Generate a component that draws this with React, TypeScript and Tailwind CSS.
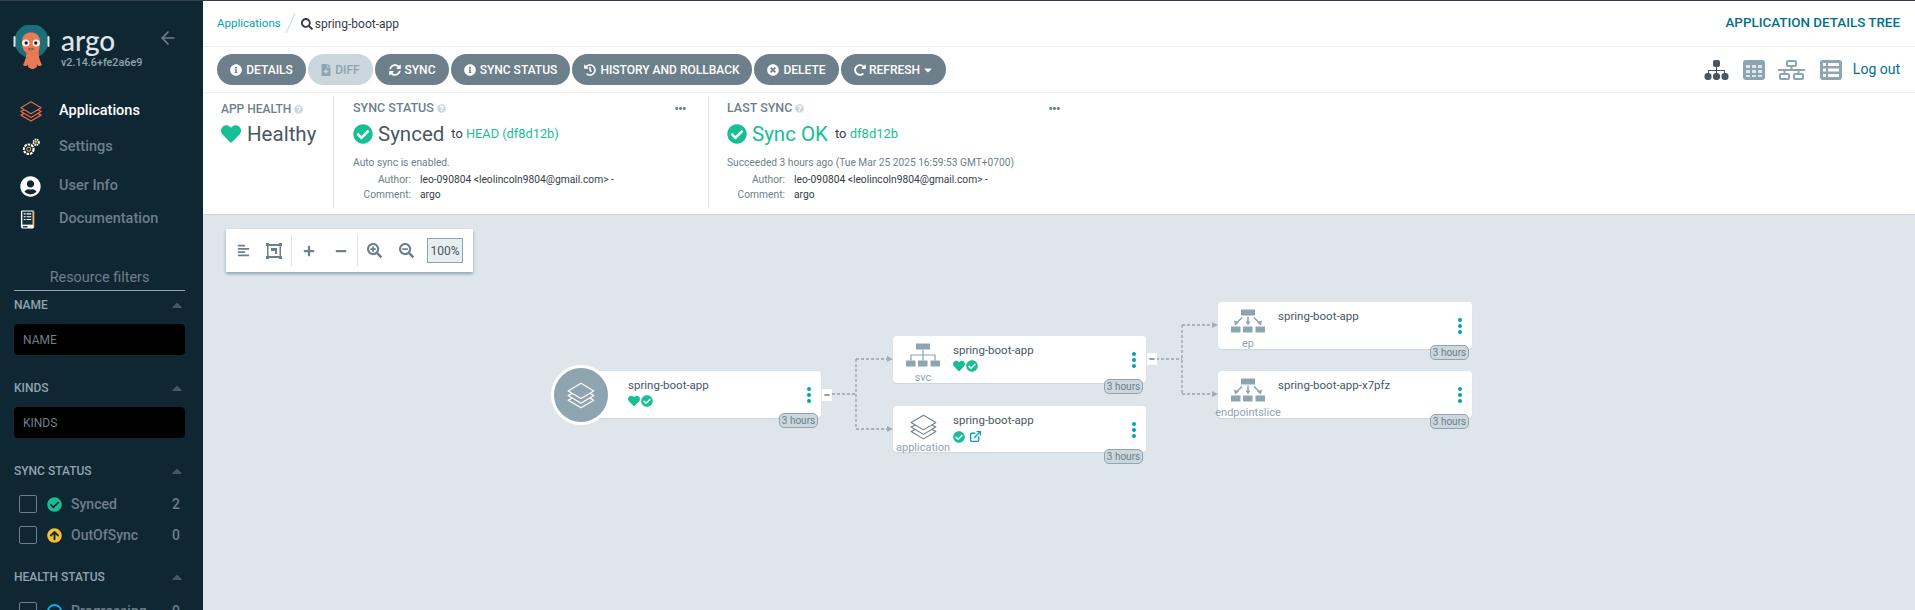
import { ArrowLeft, ExternalLink } from "lucide-react";
import {
  FaAlignLeft,
  FaCaretDown,
  FaCaretUp,
  FaCheckCircle,
  FaEllipsisH,
  FaFileMedical,
  FaHeart,
  FaHistory,
  FaInfoCircle,
  FaMinus,
  FaPlus,
  FaQuestionCircle,
  FaRedoAlt,
  FaSearch,
  FaSearchMinus,
  FaSearchPlus,
  FaSyncAlt,
  FaTimesCircle,
  FaUserCircle,
  FaArrowCircleUp,
} from "react-icons/fa";

function Layers({ className, strokeWidth = 1 }: { className?: string; strokeWidth?: number }) {
  return (
    <svg viewBox="0 0 24 24" fill="none" stroke="currentColor" strokeWidth={strokeWidth} strokeLinejoin="round" className={className}>
      <path d="M12 2 23 8.500 12 15 1 8.500z" />
      <path d="M4.500 10.600 1 12.500 12 19 23 12.500 19.500 10.600" />
      <path d="M4.500 14.600 1 16.500 12 23 23 16.500 19.500 14.600" />
    </svg>
  );
}

function ArgoLogo() {
  return (
    <svg viewBox="0 0 38 46" className="w-[38px] h-[46px] shrink-0">
      <circle cx="18.500" cy="16" r="17" fill="#1b6e7a" />
      <rect x="0.500" y="11" width="2" height="11" rx="1" fill="#dee6eb" />
      <rect x="34.500" y="11" width="2" height="11" rx="1" fill="#dee6eb" />
      <path d="M9 17C9 10 13 7.500 18 7.500S27 10 27 17c0 5-1 8-1.500 11 .5 6 2.500 10 3.500 12-2 2-4 1-5-.5 0 2-.5 4-2 3.500-1 1.500-4 1.500-5 0-1.500.5-2-1.500-2-3.500-1 1.500-3 2.500-5 .5 1-2 3-6 3.500-12C10 25 9 22 9 17z" fill="#ea7a55" />
      <circle cx="12.800" cy="18" r="3.600" fill="#fff" />
      <circle cx="23.200" cy="18" r="3.600" fill="#fff" />
      <circle cx="13.200" cy="18" r="1.700" fill="#222" />
      <circle cx="22.800" cy="18" r="1.700" fill="#222" />
      <path d="M15.500 24q2.500 2.500 5 0z" fill="#fff" stroke="#222" strokeWidth=".6" />
    </svg>
  );
}

function GearsIcon() {
  return (
    <svg viewBox="0 0 24 24" fill="none" stroke="#fff" strokeWidth="1.200" className="w-[21px] h-[21px]">
      <circle cx="10" cy="14" r="5.500" strokeDasharray="3 1" strokeWidth="2.400" />
      <circle cx="10" cy="14" r="2.200" stroke="#f2b13c" />
      <circle cx="18.500" cy="6" r="3.200" strokeDasharray="1.800 .8" strokeWidth="2" />
      <circle cx="18.500" cy="6" r="1.100" stroke="#f2b13c" />
    </svg>
  );
}

function BookIcon() {
  return (
    <svg viewBox="0 0 16 20" className="w-[15px] h-[19px]">
      <rect x="1" y="0.500" width="14" height="19" rx="1.500" fill="#fff" />
      <rect x="2.500" y="1.500" width="11" height="14" fill="#14303d" />
      <path d="M4 4h2M7 4h5M4 7h2M7 7h5M4 10h2M7 10h5" stroke="#fff" strokeWidth="1.200" />
      <rect x="14" y="1" width="1.200" height="17" fill="#f2b13c" />
      <rect x="3" y="17" width="5" height="1.500" fill="#14303d" />
    </svg>
  );
}

function TreeViewIcon() {
  return (
    <svg viewBox="0 0 25 20" className="w-[25px] h-[20px]" fill="#495763">
      <rect x="9" y="0" width="7" height="7" rx="2" />
      <path d="M12 7h1v3h8v4h-1v-3h-7v3h-1v-3H5v3H4v-4h8z" />
      <rect x="0.500" y="13" width="7" height="7" rx="3" />
      <rect x="9" y="13" width="7" height="7" rx="3" />
      <rect x="17.500" y="13" width="7" height="7" rx="3" />
    </svg>
  );
}

function GridViewIcon() {
  return (
    <svg viewBox="0 0 22 20" className="w-[22px] h-[20px]">
      <rect width="22" height="20" rx="3" fill="#8fa4b1" />
      <path d="M3 5h4v3H3zM9 5h4v3H9zM15 5h4v3h-4zM3 10h4v3H3zM9 10h4v3H9zM15 10h4v3h-4zM3 15h4v2H3zM9 15h4v2H9zM15 15h4v2h-4z" fill="#dee6eb" />
    </svg>
  );
}

function NetworkViewIcon() {
  return (
    <svg viewBox="0 0 27 20" className="w-[27px] h-[20px]" fill="none" stroke="#8fa4b1" strokeWidth="2">
      <rect x="9" y="1" width="9" height="5" rx="1" />
      <rect x="2" y="14" width="9" height="5" rx="1" />
      <rect x="16" y="14" width="9" height="5" rx="1" />
      <path d="M13.500 6v4M0 10h27M6.500 10v4M20.500 10v4" />
    </svg>
  );
}

function ListViewIcon() {
  return (
    <svg viewBox="0 0 22 20" className="w-[22px] h-[20px]">
      <rect width="22" height="20" rx="3" fill="#8fa4b1" />
      <path d="M3 3h3v3H3zM8 3h11v3H8zM3 8.500h3v3H3zM8 8.500h11v3H8zM3 14h3v3H3zM8 14h11v3H8z" fill="#fff" />
    </svg>
  );
}

function KebabDots({ className }: { className: string }) {
  return (
    <span className={`absolute flex flex-col gap-[2px] ${className}`}>
      <span className="w-[4px] h-[4px] rounded-full bg-[#00a2b3]" />
      <span className="w-[4px] h-[4px] rounded-full bg-[#00a2b3]" />
      <span className="w-[4px] h-[4px] rounded-full bg-[#00a2b3]" />
    </span>
  );
}

function NavItem({ label, active, icon, className }: { label: string; active?: boolean; icon: React.ReactNode; className: string }) {
  return (
    <div className={`flex items-center ${className}`}>
      <div className="w-[59px] pl-[20px] flex items-center">{icon}</div>
      <span className={`text-[14.500px] font-medium ${active ? "text-white" : "text-[#6d7f8b]"}`}>{label}</span>
    </div>
  );
}

function FilterHead({ label, className }: { label: string; className?: string }) {
  return (
    <div className={`flex items-center justify-between h-[14px] ${className ?? ""}`}>
      <span className="text-[12px] font-medium text-[#8fa4b1]">{label}</span>
      <FaCaretUp className="w-[16px] h-[16px] text-[#495763]" />
    </div>
  );
}

function CheckRow({ icon, label, count, className }: { icon: React.ReactNode; label: string; count: number; className?: string }) {
  return (
    <div className={`flex items-center h-[18px] pl-[5px] ${className ?? ""}`}>
      <span className="w-[18px] h-[18px] border border-[#6d7f8b] rounded-[2px] shrink-0" />
      <span className="w-[34px] pl-[1px] flex justify-center">{icon}</span>
      <span className="text-[14px] font-medium text-[#6d7f8b]">{label}</span>
      <span className="ml-auto mr-[5px] text-[14px] font-medium text-[#6d7f8b]">{count}</span>
    </div>
  );
}

function Sidebar() {
  return (
    <aside className="w-[203px] shrink-0 h-full bg-[#0f2733] overflow-hidden flex flex-col">
      <div className="flex items-start h-[69px] pl-[13px] pt-[24px] shrink-0">
        <ArgoLogo />
        <div className="ml-[10px] w-[80px] flex flex-col">
          <span className="text-[28px] leading-[30px] text-[#dee6eb] font-['Lato',sans-serif] font-medium">argo</span>
          <span className="text-[10.800px] leading-[14px] mt-[1px] text-[#8fa4b1] font-medium whitespace-nowrap">v2.14.6+fe2a6e9</span>
        </div>
        <ArrowLeft className="w-[20px] h-[20px] ml-[17px] mt-[3px] text-[#6d7f8b]" />
      </div>
      <div className="mt-[31px] flex flex-col">
        <NavItem className="h-[20px]" label="Applications" active icon={<Layers className="w-[22px] h-[22px] text-[#e9694a]" strokeWidth={1.300} />} />
        <NavItem className="h-[20px] mt-[16px]" label="Settings" icon={<GearsIcon />} />
        <NavItem className="h-[20px] mt-[19px]" label="User Info" icon={<FaUserCircle className="w-[21px] h-[21px] text-white" />} />
        <NavItem className="h-[20px] mt-[13px]" label="Documentation" icon={<BookIcon />} />
      </div>
      <div className="ml-[14px] mr-[18px] mt-[40px] border-b border-[#8fa4b1] pb-[3px] text-center text-[14.400px] leading-[18px] text-[#6d7f8b]">Resource filters</div>
      <div className="ml-[14px] mr-[18px] mt-[7px] flex flex-col">
        <FilterHead label="NAME" />
        <div className="mt-[12px] h-[31px] bg-black rounded-[4px] flex items-center pl-[9px] text-[12px] text-[#6d7f8b]">NAME</div>
        <FilterHead label="KINDS" className="mt-[26px]" />
        <div className="mt-[12px] h-[31px] bg-black rounded-[4px] flex items-center pl-[9px] text-[12px] text-[#6d7f8b]">KINDS</div>
        <FilterHead label="SYNC STATUS" className="mt-[26px]" />
        <CheckRow className="mt-[17px]" icon={<FaCheckCircle className="w-[15px] h-[15px] text-[#18be94]" />} label="Synced" count={2} />
        <CheckRow className="mt-[13px]" icon={<FaArrowCircleUp className="w-[15px] h-[15px] text-[#f4c030]" />} label="OutOfSync" count={0} />
        <FilterHead label="HEALTH STATUS" className="mt-[26px]" />
        <CheckRow className="mt-[18px]" icon={<span className="w-[15px] h-[15px] rounded-full border-2 border-[#0dadea]" />} label="Progressing" count={0} />
      </div>
    </aside>
  );
}

const actions = [
  { label: "DETAILS", icon: <FaInfoCircle className="w-[12px] h-[12px]" />, cls: "w-[89px]" },
  { label: "DIFF", icon: <FaFileMedical className="w-[10px] h-[12px] text-[#8fa4b1]" />, cls: "w-[65px] bg-[#ccd6dd] text-[#8fa4b1]" },
  { label: "SYNC", icon: <FaSyncAlt className="w-[12px] h-[12px]" />, cls: "w-[74px]" },
  { label: "SYNC STATUS", icon: <FaInfoCircle className="w-[12px] h-[12px]" />, cls: "w-[119px]" },
  { label: "HISTORY AND ROLLBACK", icon: <FaHistory className="w-[12px] h-[12px]" />, cls: "w-[180px]" },
  { label: "DELETE", icon: <FaTimesCircle className="w-[12px] h-[12px]" />, cls: "w-[85px]" },
];

function ActionButton({ label, icon, cls }: { label: string; icon: React.ReactNode; cls: string }) {
  return (
    <button className={`h-[31px] rounded-full flex items-center justify-center gap-[4px] text-[12px] font-medium ${cls.includes("bg-") ? "" : "bg-[#6d7f8b] text-white"} ${cls}`}>
      {icon}
      {label}
    </button>
  );
}

function Help() {
  return <FaQuestionCircle className="w-[9px] h-[9px] text-[#ccd6dd] ml-[3px]" />;
}

function MetaRows() {
  return (
    <div className="mt-[2px] text-[10.250px] leading-[15px] flex flex-col">
      <div className="flex">
        <span className="w-[58px] text-right text-[#6d7f8b]">Author:</span>
        <span className="ml-[9px] text-[#363c4a]">leo-090804 &lt;leolincoln9804@gmail.com&gt; -</span>
      </div>
      <div className="flex">
        <span className="w-[58px] text-right text-[#6d7f8b]">Comment:</span>
        <span className="ml-[9px] text-[#363c4a]">argo</span>
      </div>
    </div>
  );
}

function InfoPanel() {
  return (
    <div className="h-[122px] shrink-0 border-b border-[#ccd6dd] flex pt-[3px] pb-[6px]">
      <div className="w-[131px] shrink-0 border-r border-[#dee6eb] pl-[18px] pt-[6px]">
        <div className="flex items-center text-[12px] leading-[14px] font-medium text-[#6d7f8b]">APP HEALTH<Help /></div>
        <div className="flex items-center mt-[4px] h-[28px]">
          <FaHeart className="w-[20px] h-[20px] text-[#18be94]" />
          <span className="ml-[6px] text-[20.500px] text-[#495763]">Healthy</span>
        </div>
      </div>
      <div className="w-[375px] shrink-0 border-r border-[#dee6eb] pl-[19px] pr-[22px] pt-[5px]">
        <div className="flex items-center justify-between">
          <div className="flex items-center text-[12.500px] leading-[14px] font-medium text-[#6d7f8b]">SYNC STATUS<Help /></div>
          <FaEllipsisH className="w-[11px] h-[11px] text-[#6d7f8b]" />
        </div>
        <div className="flex items-center mt-[5px] h-[28px]">
          <FaCheckCircle className="w-[20px] h-[20px] text-[#18be94]" />
          <span className="ml-[5px] text-[20.500px] text-[#495763]">Synced</span>
          <span className="ml-[7px] text-[12.800px] text-[#363c4a]">to <span className="text-[#18be94]">HEAD (df8d12b)</span></span>
        </div>
        <div className="mt-[7px] text-[10.250px] leading-[15px] text-[#6d7f8b]">Auto sync is enabled.</div>
        <MetaRows />
      </div>
      <div className="w-[351px] shrink-0 pl-[18px] pt-[5px]">
        <div className="flex items-center justify-between">
          <div className="flex items-center text-[12.500px] leading-[14px] font-medium text-[#6d7f8b]">LAST SYNC<Help /></div>
          <FaEllipsisH className="w-[11px] h-[11px] text-[#6d7f8b]" />
        </div>
        <div className="flex items-center mt-[5px] h-[28px]">
          <FaCheckCircle className="w-[20px] h-[20px] text-[#18be94]" />
          <span className="ml-[5px] text-[20.500px] text-[#18be94]">Sync OK</span>
          <span className="ml-[7px] text-[13px] text-[#363c4a]">to <span className="text-[#18be94]">df8d12b</span></span>
        </div>
        <div className="mt-[7px] text-[10.200px] leading-[15px] text-[#6d7f8b] whitespace-nowrap">Succeeded 3 hours ago (Tue Mar 25 2025 16:59:53 GMT+0700)</div>
        <MetaRows />
      </div>
    </div>
  );
}

function TimeBadge({ className }: { className: string }) {
  return (
    <span className={`absolute w-[39px] h-[15px] rounded-[5px] border border-[#8fa4b1] bg-[#ccd6dd] text-[#6d7f8b] text-[10px] leading-[13px] text-center ${className}`}>3 hours</span>
  );
}

function StatusCheck() {
  return <FaCheckCircle className="w-[12px] h-[12px] text-[#18be94]" />;
}

function StatusHeart() {
  return <FaHeart className="w-[12px] h-[12px] text-[#18be94]" />;
}

function EndpointIcon({ className }: { className?: string }) {
  return (
    <svg viewBox="0 0 34 24" className={className} fill="#8fa4b1">
      <rect x="10" y="0" width="14" height="6" />
      <rect x="0" y="17" width="9.500" height="6" />
      <rect x="12" y="17" width="9.500" height="6" />
      <rect x="24.500" y="17" width="9.500" height="6" />
      <path d="M17 7v6M11 8 6 13M23 8l5 5" stroke="#8fa4b1" strokeWidth="1.500" />
      <path d="M14.500 12h5L17 16zM3 11l5 2-4 3zM31 11l-5 2 4 3z" />
    </svg>
  );
}

function ServiceIcon({ className }: { className?: string }) {
  return (
    <svg viewBox="0 0 34 24" className={className} fill="#8fa4b1">
      <rect x="10" y="0" width="14" height="6" />
      <rect x="0" y="17" width="9.500" height="6" />
      <rect x="12" y="17" width="9.500" height="6" />
      <rect x="24.500" y="17" width="9.500" height="6" />
      <path d="M17 6v11M5 17v-5.500h24V17" fill="none" stroke="#8fa4b1" strokeWidth="1.200" />
    </svg>
  );
}

function NodeCard({ className, name, icon, label, status }: { className: string; name: string; icon: React.ReactNode; label: string; status?: React.ReactNode }) {
  return (
    <div className={`absolute rounded-[4px] bg-white shadow-[0_1px_1px_#ccd6dd] ${className}`}>
      <div className="absolute left-0 top-[7px] w-[60px] flex justify-center">{icon}</div>
      <span className="absolute left-0 w-[60px] top-[35px] flex justify-center text-[11px] leading-[13px] text-[#8fa4b1] whitespace-nowrap">{label}</span>
      <div className="pl-[60px] pt-[7px] text-[11.500px] leading-[15px] text-[#495763]">{name}</div>
      <div className="pl-[60px] mt-[2px] flex items-center gap-[1px]">{status}</div>
      <KebabDots className="right-[10px] top-[16px]" />
      <TimeBadge className="right-[3px] top-[43px]" />
    </div>
  );
}

function GraphEdges() {
  return (
    <svg className="absolute left-0 top-0 w-[1712px] h-[395px] pointer-events-none" fill="none">
      <g stroke="#8fa4b1" strokeWidth="1.300" strokeDasharray="3 2">
        <path d="M629 179H653M653 144V214M653 144H684M653 214H684" />
        <path d="M953 144H979M979 110V179M979 110H1009M979 179H1009" />
      </g>
      <g fill="#a0aeb8">
        <path d="M684 141l6 3-6 3zM684 211l6 3-6 3zM1009 107l6 3-6 3zM1009 176l6 3-6 3z" />
      </g>
    </svg>
  );
}

function Graph() {
  return (
    <div className="relative flex-1 bg-[#dee6eb] overflow-hidden">
      <div className="absolute left-[23px] top-[14px] w-[247px] h-[43px] bg-white shadow-[0_2px_3px_#8fa4b1] flex items-center text-[#6d7f8b]">
        <span className="w-[35px] flex justify-center"><FaAlignLeft className="w-[13px] h-[13px]" /></span>
        <span className="w-[25px] flex justify-center">
          <svg viewBox="0 0 16 16" className="w-[16px] h-[16px]" fill="#6d7f8b"><path d="M1 1h14v14H1zM2.500 3v10h11V3z" fillRule="evenodd" /><path d="M5 5h6v6H9V8H5z" /><path d="M0 0h3v3H0zM13 0h3v3h-3zM0 13h3v3H0zM13 13h3v3h-3z" /></svg>
        </span>
        <span className="w-px h-[32px] bg-[#dee6eb] ml-[5px]" />
        <span className="w-[33px] flex justify-center"><FaPlus className="w-[12px] h-[12px]" /></span>
        <span className="w-[32px] flex justify-center"><FaMinus className="w-[12px] h-[12px]" /></span>
        <span className="w-px h-[32px] bg-[#dee6eb]" />
        <span className="w-[33px] flex justify-center"><FaSearchPlus className="w-[15px] h-[15px]" /></span>
        <span className="w-[31px] flex justify-center"><FaSearchMinus className="w-[15px] h-[15px]" /></span>
        <span className="ml-[5px] w-[36px] h-[25px] border border-[#8fa4b1] bg-[#e8edf0] text-[12px] flex items-center justify-center text-[#495763]">100%</span>
      </div>

      <GraphEdges />

      <div className="absolute left-[376px] top-[156px] w-[242px] h-[47px] rounded-[4px] bg-white shadow-[0_1px_1px_#ccd6dd]">
        <div className="pl-[49px] pt-[7px] text-[11.500px] leading-[15px] text-[#495763]">spring-boot-app</div>
        <div className="pl-[49px] mt-[2px] flex items-center gap-[1px]"><StatusHeart /><StatusCheck /></div>
        <KebabDots className="right-[10px] top-[16px]" />
        <TimeBadge className="right-[3px] top-[42px]" />
      </div>
      <div className="absolute left-[348px] top-[150px] w-[60px] h-[60px] rounded-full border-[3px] border-white bg-[#8fa4b1] flex items-center justify-center text-white">
        <Layers className="w-[28px] h-[28px]" />
      </div>
      <span className="absolute left-[619px] top-[174px] w-[10px] h-[12px] bg-white flex items-center justify-center"><FaMinus className="w-[6px] h-[6px] text-[#363c4a]" /></span>

      <NodeCard className="left-[690px] top-[121px] w-[253px] h-[47px]" name="spring-boot-app" label="svc" icon={<ServiceIcon className="w-[34px] h-[25px]" />} status={<><StatusHeart /><StatusCheck /></>} />
      <span className="absolute left-[944px] top-[138px] w-[10px] h-[12px] bg-white flex items-center justify-center"><FaMinus className="w-[6px] h-[6px] text-[#363c4a]" /></span>
      <NodeCard
        className="left-[690px] top-[191px] w-[253px] h-[46px]"
        name="spring-boot-app"
        label="application"
        icon={<Layers className="w-[27px] h-[27px] text-[#6d7f8b]" />}
        status={<><StatusCheck /><ExternalLink className="ml-[3px] w-[13px] h-[13px] text-[#00a2b3]" strokeWidth={2.500} /></>}
      />
      <NodeCard className="left-[1015px] top-[87px] w-[254px] h-[47px]" name="spring-boot-app" label="ep" icon={<EndpointIcon className="w-[34px] h-[25px]" />} />
      <NodeCard className="left-[1015px] top-[156px] w-[254px] h-[47px]" name="spring-boot-app-x7pfz" label="endpointslice" icon={<EndpointIcon className="w-[34px] h-[25px]" />} />
    </div>
  );
}

export default function App() {
  return (
    <div className="w-[1915px] h-[610px] overflow-hidden flex flex-col font-['Roboto',sans-serif] bg-white">
      <div className="h-px bg-[#363c4a] shrink-0" />
      <div className="flex flex-1 min-h-0">
        <Sidebar />
        <main className="flex-1 min-w-0 flex flex-col">
          <div className="h-[46px] shrink-0 border-b border-[#eeeeee] flex items-center pl-[14px] pr-[15px]">
            <span className="text-[11.500px] text-[#00a2b3]">Applications</span>
            <span className="ml-[9px] w-px h-[21px] bg-[#ccd6dd] rotate-[25deg]" />
            <FaSearch className="ml-[10px] w-[12px] h-[12px] text-[#363c4a]" />
            <span className="ml-[2px] text-[12px] text-[#363c4a]">spring-boot-app</span>
            <span className="ml-auto text-[13.400px] font-medium text-[#00708c]">APPLICATION DETAILS TREE</span>
          </div>
          <div className="h-[46px] shrink-0 border-b border-[#eeeeee] flex items-center pl-[14px] pr-[15px]">
            <div className="flex gap-[2px]">
              {actions.map((a) => (
                <ActionButton key={a.label} label={a.label} icon={a.icon} cls={a.cls} />
              ))}
              <button className="w-[105px] h-[31px] rounded-full bg-[#6d7f8b] text-white flex items-center justify-center gap-[3px] text-[12px] font-medium">
                <FaRedoAlt className="w-[12px] h-[12px]" />
                REFRESH
                <FaCaretDown className="w-[10px] h-[12px]" />
              </button>
            </div>
            <div className="ml-auto flex items-center">
              <TreeViewIcon />
              <span className="ml-[14px]"><GridViewIcon /></span>
              <span className="ml-[13px]"><NetworkViewIcon /></span>
              <span className="ml-[15px]"><ListViewIcon /></span>
              <span className="ml-[11px] text-[14px] text-[#00708c]">Log out</span>
            </div>
          </div>
          <InfoPanel />
          <Graph />
        </main>
      </div>
    </div>
  );
}
